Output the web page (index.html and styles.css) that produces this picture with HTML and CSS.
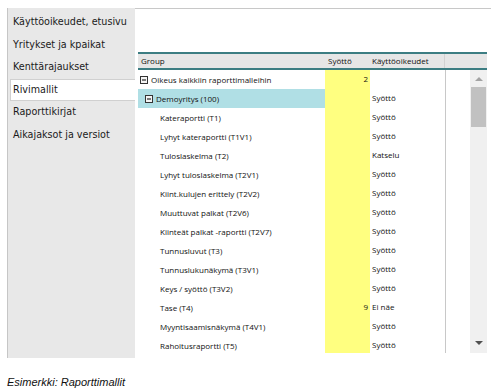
FILE: index.html
```html
<!DOCTYPE html>
<html>
<head>
	<meta charset="utf-8">
	<title>Rivimallit</title>
	<link rel="stylesheet" href="styles.css">
</head>
<body>
	<div class="page">

		<!-- Välilehdet -->
		<div class="tabs">
			<div class="tab">Käyttöoikeudet, etusivu</div>
			<div class="tab">Yritykset ja kpaikat</div>
			<div class="tab">Kenttärajaukset</div>
			<div class="tab active">Rivimallit</div>
			<div class="tab">Raporttikirjat</div>
			<div class="tab">Aikajaksot ja versiot</div>
		</div>

		<!-- Sisältö -->
		<div class="content">
			<div class="grid">
				<div class="grid-head">
					<div class="col-group">Group</div>
					<div class="col-input">Syöttö</div>
					<div class="col-right">Käyttöoikeudet</div>
					<div class="col-rest"></div>
				</div>
				<div class="grid-body">
					<div class="rows">
						<div class="row">
							<div class="col-group lvl0"><svg class="toggle" width="8" height="8" viewBox="0 0 8 8"><rect x="0.5" y="0.5" width="7" height="7" fill="#f4f4f4" stroke="#333"/><path d="M2 4h4" stroke="#000"/></svg>Oikeus kaikkiin raporttimalleihin</div>
							<div class="col-input">2</div>
							<div class="col-right"></div>
						</div>
						<div class="row">
							<div class="col-group lvl1 selected"><svg class="toggle" width="8" height="8" viewBox="0 0 8 8"><rect x="0.5" y="0.5" width="7" height="7" fill="#f4f4f4" stroke="#333"/><path d="M2 4h4" stroke="#000"/></svg>Demoyritys (100)</div>
							<div class="col-input"></div>
							<div class="col-right">Syöttö</div>
						</div>
						<div class="row"><div class="col-group lvl2">Kateraportti (T1)</div><div class="col-input"></div><div class="col-right">Syöttö</div></div>
						<div class="row"><div class="col-group lvl2">Lyhyt kateraportti (T1V1)</div><div class="col-input"></div><div class="col-right">Syöttö</div></div>
						<div class="row"><div class="col-group lvl2">Tuloslaskelma (T2)</div><div class="col-input"></div><div class="col-right">Katselu</div></div>
						<div class="row"><div class="col-group lvl2">Lyhyt tuloslaskelma (T2V1)</div><div class="col-input"></div><div class="col-right">Syöttö</div></div>
						<div class="row"><div class="col-group lvl2">Kiint.kulujen erittely (T2V2)</div><div class="col-input"></div><div class="col-right">Syöttö</div></div>
						<div class="row"><div class="col-group lvl2">Muuttuvat palkat (T2V6)</div><div class="col-input"></div><div class="col-right">Syöttö</div></div>
						<div class="row"><div class="col-group lvl2">Kiinteät palkat -raportti (T2V7)</div><div class="col-input"></div><div class="col-right">Syöttö</div></div>
						<div class="row"><div class="col-group lvl2">Tunnusluvut (T3)</div><div class="col-input"></div><div class="col-right">Syöttö</div></div>
						<div class="row"><div class="col-group lvl2">Tunnuslukunäkymä (T3V1)</div><div class="col-input"></div><div class="col-right">Syöttö</div></div>
						<div class="row"><div class="col-group lvl2">Keys / syöttö (T3V2)</div><div class="col-input"></div><div class="col-right">Syöttö</div></div>
						<div class="row"><div class="col-group lvl2">Tase (T4)</div><div class="col-input">9</div><div class="col-right">Ei näe</div></div>
						<div class="row"><div class="col-group lvl2">Myyntisaamisnäkymä (T4V1)</div><div class="col-input"></div><div class="col-right">Syöttö</div></div>
						<div class="row"><div class="col-group lvl2">Rahoitusraportti (T5)</div><div class="col-input"></div><div class="col-right">Syöttö</div></div>
						<div class="row"><div class="col-group lvl2"></div><div class="col-input"></div><div class="col-right"></div></div>
					</div>
					<div class="filler"></div>
					<div class="scrollbar">
						<span class="arrow-up"></span>
						<span class="thumb"></span>
						<span class="arrow-down"></span>
					</div>
				</div>
			</div>
		</div>
	</div>

	<p class="caption">Esimerkki: Raporttimallit</p>
</body>
</html>
```

FILE: styles.css
```css
* {
	box-sizing: border-box;
}

body {
	margin: 0;
	background: #fff;
	color: #111;
}

.page {
	display: flex;
	margin: 8px 6px 0 7px;
	height: 350px;
}

/* Tabs */
.tabs {
	width: 128px;
	background-color: #e8e8e8;
	border-left: 1px solid #c6c6c6;
	padding-top: 3px;
	font-family: "DejaVu Sans", Verdana, sans-serif;
	font-size: 9.6px;
}

.tab {
	height: 22.6px;
	line-height: 22px;
	padding-left: 5px;
	white-space: nowrap;
	color: #1a1a1a;
}

.tab.active {
	background-color: #fff;
	border: 1px solid #d0d0d0;
	border-right: none;
	margin-left: 2px;
	padding-left: 2px;
	line-height: 20px;
}

/* Content */
.content {
	flex: 1;
	border-top: 1px solid #c8c8c8;
	padding: 43px 4px 0 3px;
}

.grid {
	font-family: "Open Sans", "Noto Sans", sans-serif;
	font-size: 8px;
	color: #111;
}

.grid-head {
	display: flex;
	height: 18px;
	background-color: #e6e6e6;
	border-top: 2px solid #3c7d82;
	border-bottom: 2px solid #3c7d82;
	line-height: 14px;
}

.grid-head .col-group {
	padding-left: 3px;
}

.grid-head .col-input {
	padding-left: 3px;
	text-align: left;
}

.grid-head .col-right {
	border-right: 1px solid #d2d2d2;
}

.col-group {
	width: 187px;
}

.col-input {
	width: 45px;
	text-align: right;
	padding-right: 2px;
}

.col-right {
	width: 75px;
	padding-left: 2px;
}

.col-rest {
	flex: 1;
}

.grid-body {
	display: flex;
	height: 283px;
}

.rows {
	width: 308px;
	overflow: hidden;
	border-right: 1px solid #c8c8c8;
}

.row {
	display: flex;
	height: 19px;
	line-height: 18px;
}

.row .col-input {
	background-color: #ffff80;
}

.row .col-group {
	display: flex;
	align-items: center;
	white-space: nowrap;
}

.lvl0 {
	padding-left: 2px;
}

.lvl1 {
	padding-left: 7px;
}

.lvl2 {
	padding-left: 22px;
}

.selected {
	background-color: #b0dfe5;
}

.toggle {
	margin-right: 3px;
	flex-shrink: 0;
}

.filler {
	flex: 1;
}

.scrollbar {
	width: 17px;
	background-color: #f0f0f0;
	display: flex;
	flex-direction: column;
	align-items: center;
}

.arrow-up {
	width: 0;
	height: 0;
	margin-top: 7px;
	border-left: 4px solid transparent;
	border-right: 4px solid transparent;
	border-bottom: 4px solid #a3a3a3;
}

.thumb {
	width: 15px;
	height: 40px;
	margin-top: 6px;
	background-color: #c1c1c1;
}

.arrow-down {
	width: 0;
	height: 0;
	margin-top: auto;
	margin-bottom: 8px;
	border-left: 4px solid transparent;
	border-right: 4px solid transparent;
	border-top: 4px solid #505050;
}

.caption {
	margin: 18px 0 0 7px;
	font-family: "Liberation Sans", Arial, sans-serif;
	font-style: italic;
	font-size: 11px;
	color: #111;
}
```
